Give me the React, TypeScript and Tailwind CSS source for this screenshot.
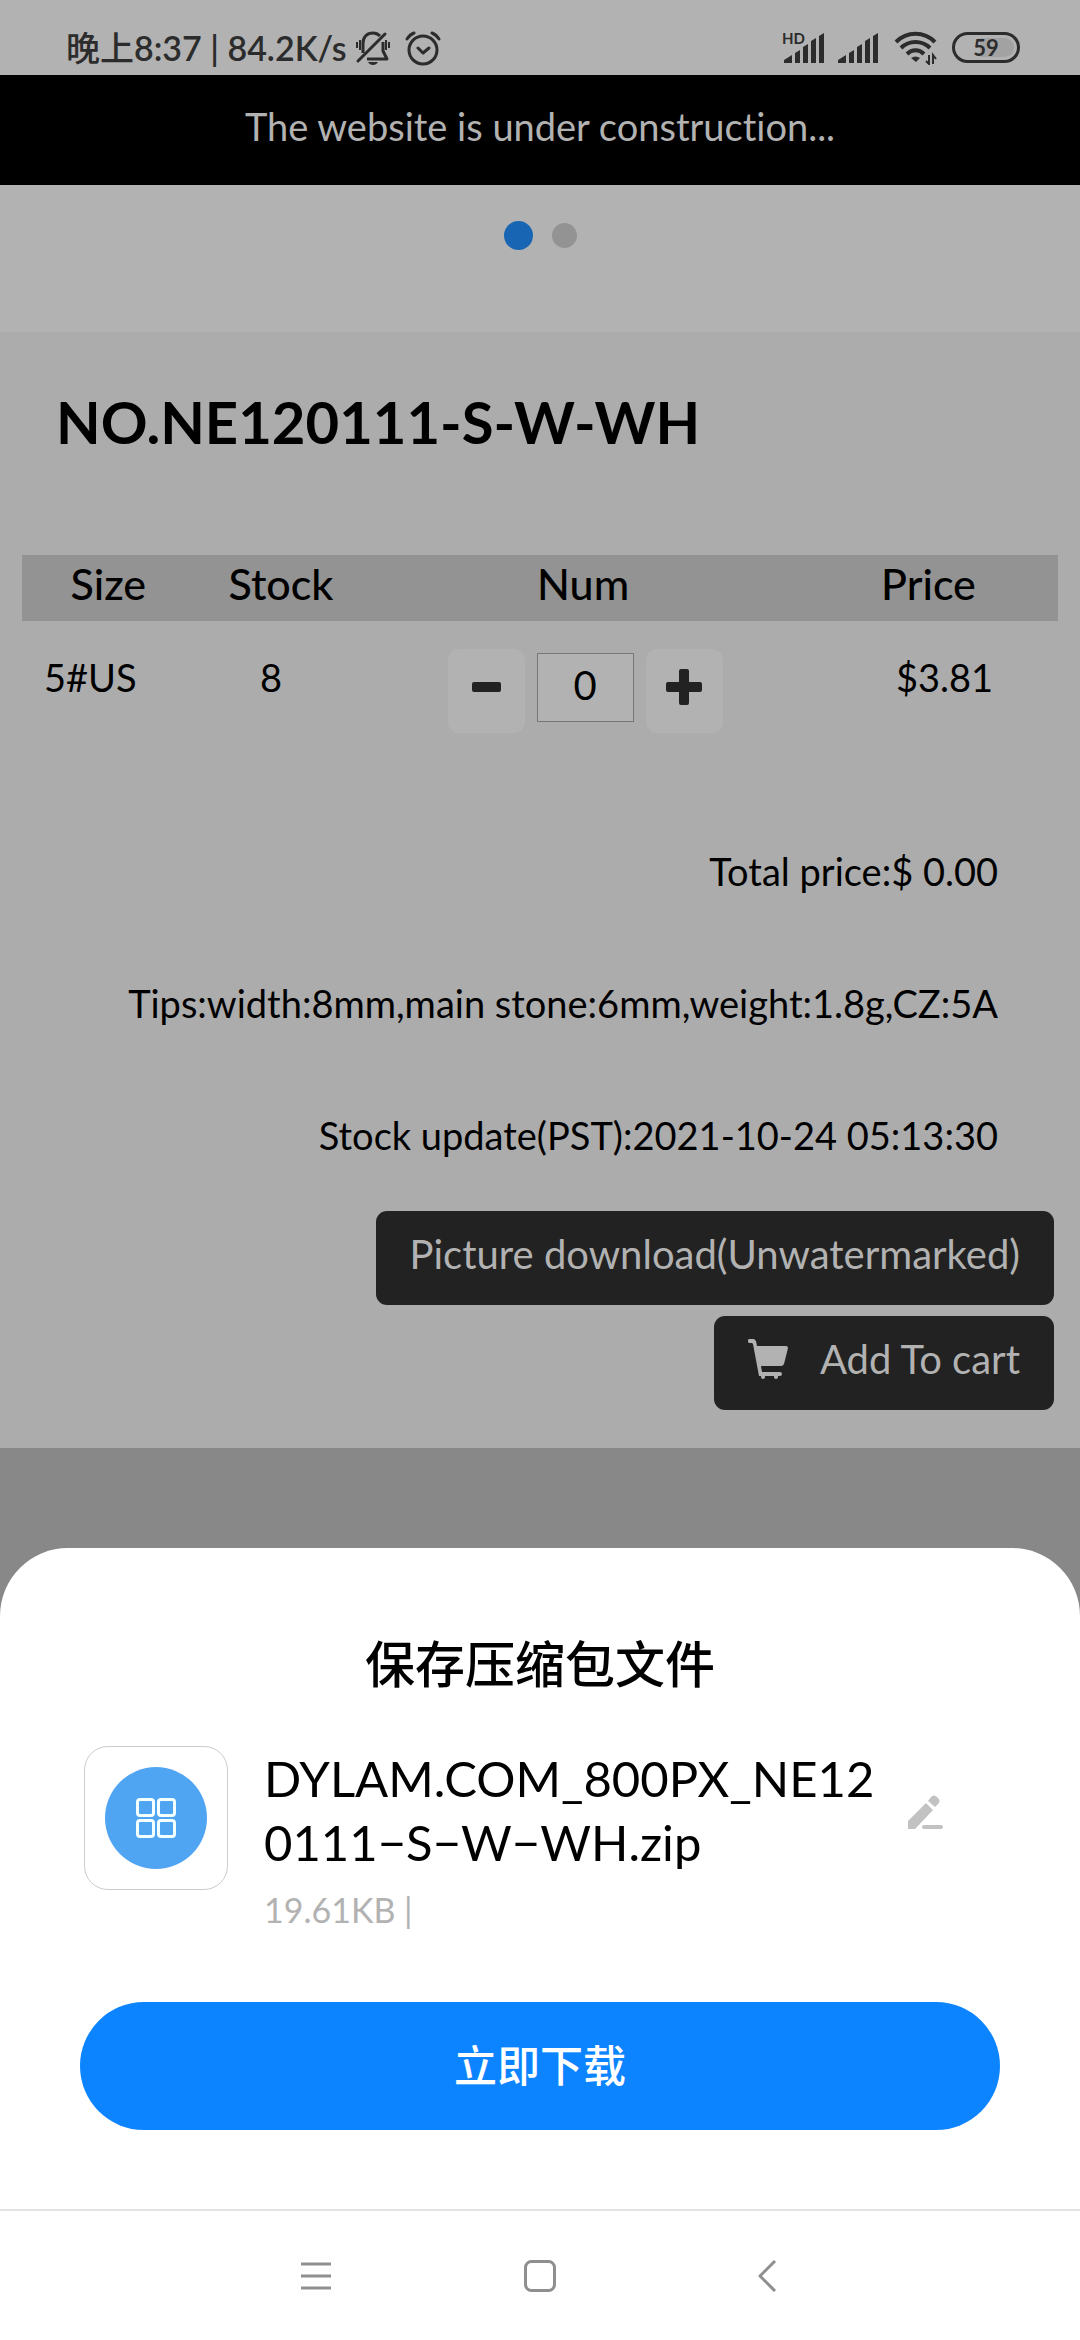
import React, { ReactNode, useState } from 'react';
import { clsx } from 'clsx';

interface StockRow {
  size: string;
  stock: number;
  price: string;
}

const ROWS: StockRow[] = [{ size: '5#US', stock: 8, price: '$3.81' }];

/**
 * StatusBar - clock, network speed and system indicators
 */
function StatusBar() {
  return (
    <header className="flex h-[75px] items-center justify-between bg-[#b2b2b2] pt-5 pr-[60px] pl-[66px] text-[#2c2c2c]">
      <div className="flex items-center">
        <span className="text-[34px] leading-[40px] font-semibold whitespace-pre">
          <span className="font-medium">晚上</span>8:37 | 84.2K/s
        </span>
        <MutedBellIcon />
        <AlarmIcon />
      </div>
      <div className="flex items-center">
        <div className="relative">
          <span className="absolute -top-[3px] -left-[2px] text-[15px] leading-[16px] font-bold">HD</span>
          <SignalIcon />
        </div>
        <SignalIcon />
        <WifiIcon />
        <div className="relative flex h-[31px] w-[68px] items-center justify-center rounded-full border-[3px] border-[#2c2c2c]">
          <span className="absolute inset-y-[3px] right-[3px] w-[34px] rounded-r-full bg-[#a2a2a2]" />
          <span className="relative text-[22px] leading-none font-bold">59</span>
        </div>
      </div>
    </header>
  );
}

function MutedBellIcon() {
  return (
    <svg className="ml-2 h-[36px] w-[36px]" viewBox="0 0 36 36" fill="none" stroke="currentColor" strokeWidth="3">
      <path d="M8 23V13C8 7 12 3 18 3c3 0 5 1 7 3M28 12v9l4 8H12" strokeLinejoin="round" />
      <path d="M30 4L3 31" strokeLinecap="round" />
      <path d="M2 12v6M5 10v10M31 10v10M34 12v6" strokeWidth="2" />
      <path d="M13 32h10c-1 2-3 3-5 3s-4-1-5-3z" fill="currentColor" stroke="none" />
    </svg>
  );
}

function AlarmIcon() {
  return (
    <svg
      className="ml-[14px] h-[36px] w-[36px]"
      viewBox="0 0 36 36"
      fill="none"
      stroke="currentColor"
      strokeWidth="3"
      strokeLinecap="round"
      strokeLinejoin="round"
    >
      <circle cx="18" cy="20" r="14" />
      <path d="M13 18l5 5 6-5M2 9c2-3 4-5 7-6M34 9c-2-3-4-5-7-6" />
    </svg>
  );
}

function SignalIcon() {
  return (
    <svg className="mr-[14px] h-[30px] w-[40px]" viewBox="0 0 40 30" fill="currentColor">
      <path d="M0 27l8-5v8H0zM11 20l5-3v13h-5zM19 14l5-3v19h-5zM27 8l5-3v25h-5zM35 3l5-3v30h-5z" />
    </svg>
  );
}

function WifiIcon() {
  return (
    <svg className="mr-[14px] ml-[2px] h-[34px] w-[44px]" viewBox="0 0 44 34" fill="none" stroke="currentColor" strokeWidth="4">
      <path d="M2 11c11-11 28-11 39 0M7 17c8-8 21-8 29 0M13 23c5-5 12-5 17 0" />
      <path d="M17 27c3-2 6-2 9 0l-4 4z" fill="currentColor" stroke="none" />
      <path d="M35 24v9l-3-3M39 33v-9l3 4" strokeWidth="2" />
    </svg>
  );
}

/**
 * StepButton - square button beside the quantity field
 */
function StepButton({ label, onClick, children }: { label: string; onClick: () => void; children: ReactNode }) {
  return (
    <button
      type="button"
      aria-label={label}
      onClick={onClick}
      className="flex h-[84px] w-[77px] items-center justify-center rounded-[11px] bg-[#b2b2b2] pb-2 text-[#222]"
    >
      <svg className="h-9 w-9" viewBox="0 0 36 36" fill="currentColor">
        {children}
      </svg>
    </button>
  );
}

function Quantity({ max }: { max: number }) {
  const [num, setNum] = useState(0);

  return (
    <div className="flex items-center justify-center gap-3">
      <StepButton label="Decrease" onClick={() => setNum(Math.max(0, num - 1))}>
        <rect x="4" y="13" width="29" height="10" rx="2" />
      </StepButton>
      <input
        aria-label="Num"
        inputMode="numeric"
        value={num}
        onChange={(e) => setNum(Math.min(max, Number(e.target.value) || 0))}
        className="mb-2 h-[69px] w-[97px] border border-[#777] bg-[#b2b2b2] pb-1 text-center text-[40px] leading-none"
      />
      <StepButton label="Increase" onClick={() => setNum(Math.min(max, num + 1))}>
        <path d="M15 0h6a2 2 0 0 1 2 2v11h11a2 2 0 0 1 2 2v6a2 2 0 0 1-2 2H23v11a2 2 0 0 1-2 2h-6a2 2 0 0 1-2-2V23H2a2 2 0 0 1-2-2v-6a2 2 0 0 1 2-2h11V2a2 2 0 0 1 2-2z" />
      </StepButton>
    </div>
  );
}

function StockTable() {
  return (
    <table className="w-full table-fixed text-center">
      <thead className="bg-[#939393] text-[43px] leading-[58px]">
        <tr>
          <th className="w-1/6 pb-2 font-medium">Size</th>
          <th className="w-1/6 pb-2 font-medium">Stock</th>
          <th className="w-5/12 pb-2 font-medium">Num</th>
          <th className="w-1/4 pb-2 font-medium">Price</th>
        </tr>
      </thead>
      <tbody className="text-[38px] leading-[56px]">
        {ROWS.map((row) => (
          <tr key={row.size} className="align-top">
            <td className="pt-7 pr-9">{row.size}</td>
            <td className="pt-7 pr-5">{row.stock}</td>
            <td className="pt-7 pl-1">
              <Quantity max={row.stock} />
            </td>
            <td className="pt-7 pl-8">{row.price}</td>
          </tr>
        ))}
      </tbody>
    </table>
  );
}

/**
 * DarkButton - dark action button, right aligned under the product
 */
function DarkButton({ className, children }: { className?: string; children: ReactNode }) {
  return (
    <button
      type="button"
      className={clsx(
        'flex h-[94px] items-center rounded-[11px] bg-[#222] px-[34px] pb-2 text-[40px] text-[#b2b2b2]',
        className,
      )}
    >
      {children}
    </button>
  );
}

function Product() {
  return (
    <section className="bg-[#acacac] px-[22px] pt-[50px] pb-[38px] text-black">
      <h1 className="pl-[34px] text-[58px] leading-[80px] font-bold">NO.NE120111-S-W-WH</h1>
      <div className="mt-[93px]">
        <StockTable />
      </div>
      <div className="mt-[72px] flex flex-col pr-[60px] text-right text-[38px] leading-[132px]">
        <p>Total price:$ 0.00</p>
        <p>Tips:width:8mm,main stone:6mm,weight:1.8g,CZ:5A</p>
        <p>Stock update(PST):2021-10-24 05:13:30</p>
      </div>
      <div className="mt-[10px] flex flex-col items-end gap-[11px] pr-1">
        <DarkButton>Picture download(Unwatermarked)</DarkButton>
        <DarkButton className="gap-8">
          <svg className="h-10 w-10" viewBox="0 0 40 40" fill="currentColor">
            <path d="M1 0h5l2 2 1 5h29q2 0 2 2l-4 16q-1 2-3 2H13l1 6h18q2 0 2 2t-2 2h-2v1q0 2-2 2t-2-2v-1H17v1q0 2-2 2t-2-2v-1h-2L5 5 4 4H1Q0 4 0 2t1-2z" />
          </svg>
          Add To cart
        </DarkButton>
      </div>
    </section>
  );
}

/**
 * DownloadSheet - bottom sheet asking to save the file
 */
function DownloadSheet() {
  return (
    <section className="mt-[100px] flex flex-1 flex-col rounded-t-[68px] bg-white px-20 pt-[80px] text-black">
      <h2 className="text-center text-[50px] leading-[72px] font-medium">保存压缩包文件</h2>
      <div className="mt-[46px] flex items-start pr-[56px] pl-1">
        <div className="flex h-36 w-36 shrink-0 items-center justify-center rounded-3xl border border-[#ccc]">
          <div className="flex h-[102px] w-[102px] items-center justify-center rounded-full bg-[#50a5f3]">
            <svg className="h-10 w-10" viewBox="0 0 40 40" fill="none" stroke="#f4ffff" strokeWidth="3">
              <rect x="1.5" y="1.5" width="16" height="16" rx="2.5" />
              <rect x="22.5" y="1.5" width="16" height="16" rx="2.5" />
              <rect x="1.5" y="22.5" width="16" height="16" rx="2.5" />
              <rect x="22.5" y="22.5" width="16" height="16" rx="2.5" />
            </svg>
          </div>
        </div>
        <div className="ml-9 min-w-0 flex-1">
          <p className="text-[49px] leading-[64px]">
            DYLAM.COM_800PX_NE12
            <br />
            0111−S−W−WH.zip
          </p>
          <p className="mt-2 text-[34px] leading-[56px] text-[#b2b2b2]">19.61KB |</p>
        </div>
        <button type="button" aria-label="Rename" className="mt-[49px] shrink-0 text-[#c2c2c2]">
          <svg className="h-9 w-9" viewBox="0 0 36 36">
            <path d="M0 34v-8L18 8l7 7L7 34zM20 6l3-4q3-3 6 0l1 1q3 3 0 6l-3 3z" fill="currentColor" />
            <path d="M16 32h17" stroke="currentColor" strokeWidth="4" strokeLinecap="round" />
          </svg>
        </button>
      </div>
      <button type="button" className="mt-16 h-32 rounded-full bg-[#0d84ff] text-[43px] font-medium text-white">
        立即下载
      </button>
    </section>
  );
}

function SystemNav() {
  return (
    <nav
      aria-label="System"
      className="flex h-[131px] items-center justify-center gap-44 border-t-2 border-[#e2e2e2] bg-white text-[#8f8f8f]"
    >
      <button type="button" aria-label="Recents" className="flex w-12 justify-center">
        <svg className="h-8 w-8" viewBox="0 0 32 32" stroke="currentColor" strokeWidth="3">
          <path d="M1 4h30M1 16h30M1 28h30" />
        </svg>
      </button>
      <button type="button" aria-label="Home" className="flex w-12 justify-center">
        <svg className="h-8 w-8" viewBox="0 0 32 32" fill="none" stroke="currentColor" strokeWidth="3">
          <rect x="1.5" y="1.5" width="29" height="29" rx="6" />
        </svg>
      </button>
      <button type="button" aria-label="Back" className="flex w-12 justify-center">
        <svg className="h-8 w-8" viewBox="0 0 32 32" fill="none" stroke="currentColor" strokeWidth="3">
          <path d="M27 1L12 16l15 15" strokeLinejoin="round" />
        </svg>
      </button>
    </nav>
  );
}

export default function App() {
  return (
    <div className="flex min-h-screen flex-col bg-[#888] font-['Lato','Noto_Sans_CJK_SC',sans-serif] [font-variant-ligatures:none]">
      <StatusBar />
      <div className="flex h-[110px] items-center justify-center bg-black pb-2 text-[38px] text-[#b2b2b2]">
        The website is under construction...
      </div>
      <div className="flex h-[147px] items-start justify-center gap-[19px] bg-[#b2b2b2] pt-9">
        <button type="button" aria-label="Slide 1" className="h-[29px] w-[29px] rounded-full bg-[#1866b3]" />
        <button type="button" aria-label="Slide 2" className="mt-[2px] h-[25px] w-[25px] rounded-full bg-[#939393]" />
      </div>
      <Product />
      <DownloadSheet />
      <SystemNav />
    </div>
  );
}
